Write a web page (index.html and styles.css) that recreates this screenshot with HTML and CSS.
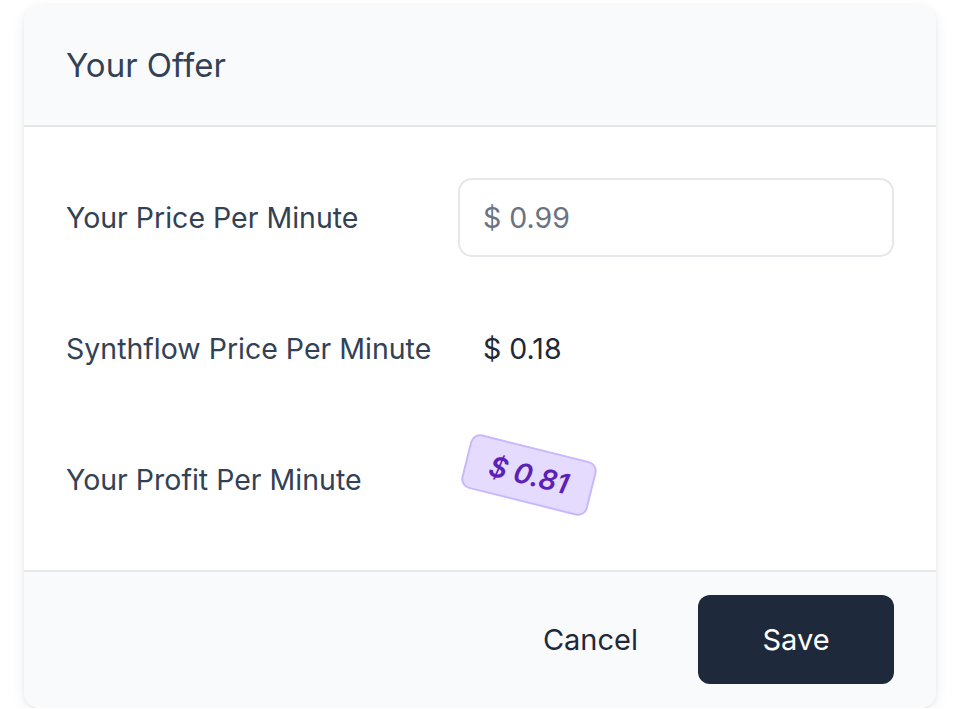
FILE: index.html
```html
<!DOCTYPE html>
<html lang="en">
<head>
    <meta charset="UTF-8">
    <meta name="viewport" content="width=device-width, initial-scale=1.0">
    <title>Your Offer</title>
    <link rel="stylesheet" href="styles.css">
</head>
<body>
    <div class="card">
        <div class="card-header">
            <h2>Your Offer</h2>
        </div>
        <div class="card-body">
            <div class="row">
                <label for="price">Your Price Per Minute</label>
                <input type="text" id="price" name="price" placeholder="$ 0.99">
            </div>
            <div class="row">
                <span class="label">Synthflow Price Per Minute</span>
                <span class="value">$ 0.18</span>
            </div>
            <div class="row">
                <span class="label">Your Profit Per Minute</span>
                <span class="value"><span class="badge">$ 0.81</span></span>
            </div>
        </div>
        <div class="card-footer">
            <button type="button" class="btn-cancel">Cancel</button>
            <button type="submit" class="btn-save">Save</button>
        </div>
    </div>
</body>
</html>
```

FILE: styles.css
```css
body {
    font-family: Inter, "Noto Sans", sans-serif;
    margin: 0;
    padding: 5px 24px 0;
    background-color: #fff;
}
.card {
    width: 912px;
    height: 703px;
    display: flex;
    flex-direction: column;
    background: #fff;
    border-radius: 16px;
    box-shadow: 0 4px 14px rgba(0, 0, 0, 0.08), 0 1px 3px rgba(0, 0, 0, 0.06);
    overflow: hidden;
}
.card-header {
    height: 120px;
    display: flex;
    align-items: center;
    padding: 0 42px;
    background: #f9fafb;
    border-bottom: 2px solid #e5e7eb;
}
h2 {
    margin: 0;
    font-size: 33px;
    font-weight: 400;
    color: #334155;
}
.card-body {
    padding: 50px 42px 51px;
    display: flex;
    flex-direction: column;
    gap: 51px;
}
.row {
    height: 80px;
    display: grid;
    grid-template-columns: 392px 1fr;
    align-items: center;
}
label, .label {
    font-size: 28.5px;
    color: #334155;
}
input {
    width: 100%;
    min-width: 0;
    height: 79px;
    box-sizing: border-box;
    padding: 0 23px;
    font-family: inherit;
    font-size: 28.5px;
    color: #1f2937;
    border: 2px solid #e5e7eb;
    border-radius: 14px;
    outline: none;
}
input::placeholder {
    color: #6b7280;
}
.value {
    padding-left: 25px;
    font-size: 28.5px;
    color: #1f2937;
}
.badge {
    display: inline-flex;
    align-items: center;
    justify-content: center;
    width: 130px;
    height: 56px;
    box-sizing: border-box;
    margin-left: -19px;
    margin-top: -8px;
    background: #e4dbff;
    border: 2px solid #c9b8fc;
    border-radius: 10px;
    color: #5b21b6;
    font-size: 28px;
    font-weight: 600;
    font-style: italic;
    transform: rotate(14deg);
}
.card-footer {
    flex: 1;
    display: flex;
    justify-content: flex-end;
    align-items: flex-start;
    gap: 36px;
    padding: 23px 42px 0;
    background: #f9fafb;
    border-top: 2px solid #e5e7eb;
}
button {
    font-family: inherit;
    font-size: 29px;
    border: none;
    cursor: pointer;
}
.btn-cancel {
    height: 89px;
    padding: 0 24px;
    background: none;
    color: #1e293b;
}
.btn-save {
    width: 196px;
    height: 89px;
    background-color: #1e293b;
    color: #fff;
    border-radius: 12px;
}
```
